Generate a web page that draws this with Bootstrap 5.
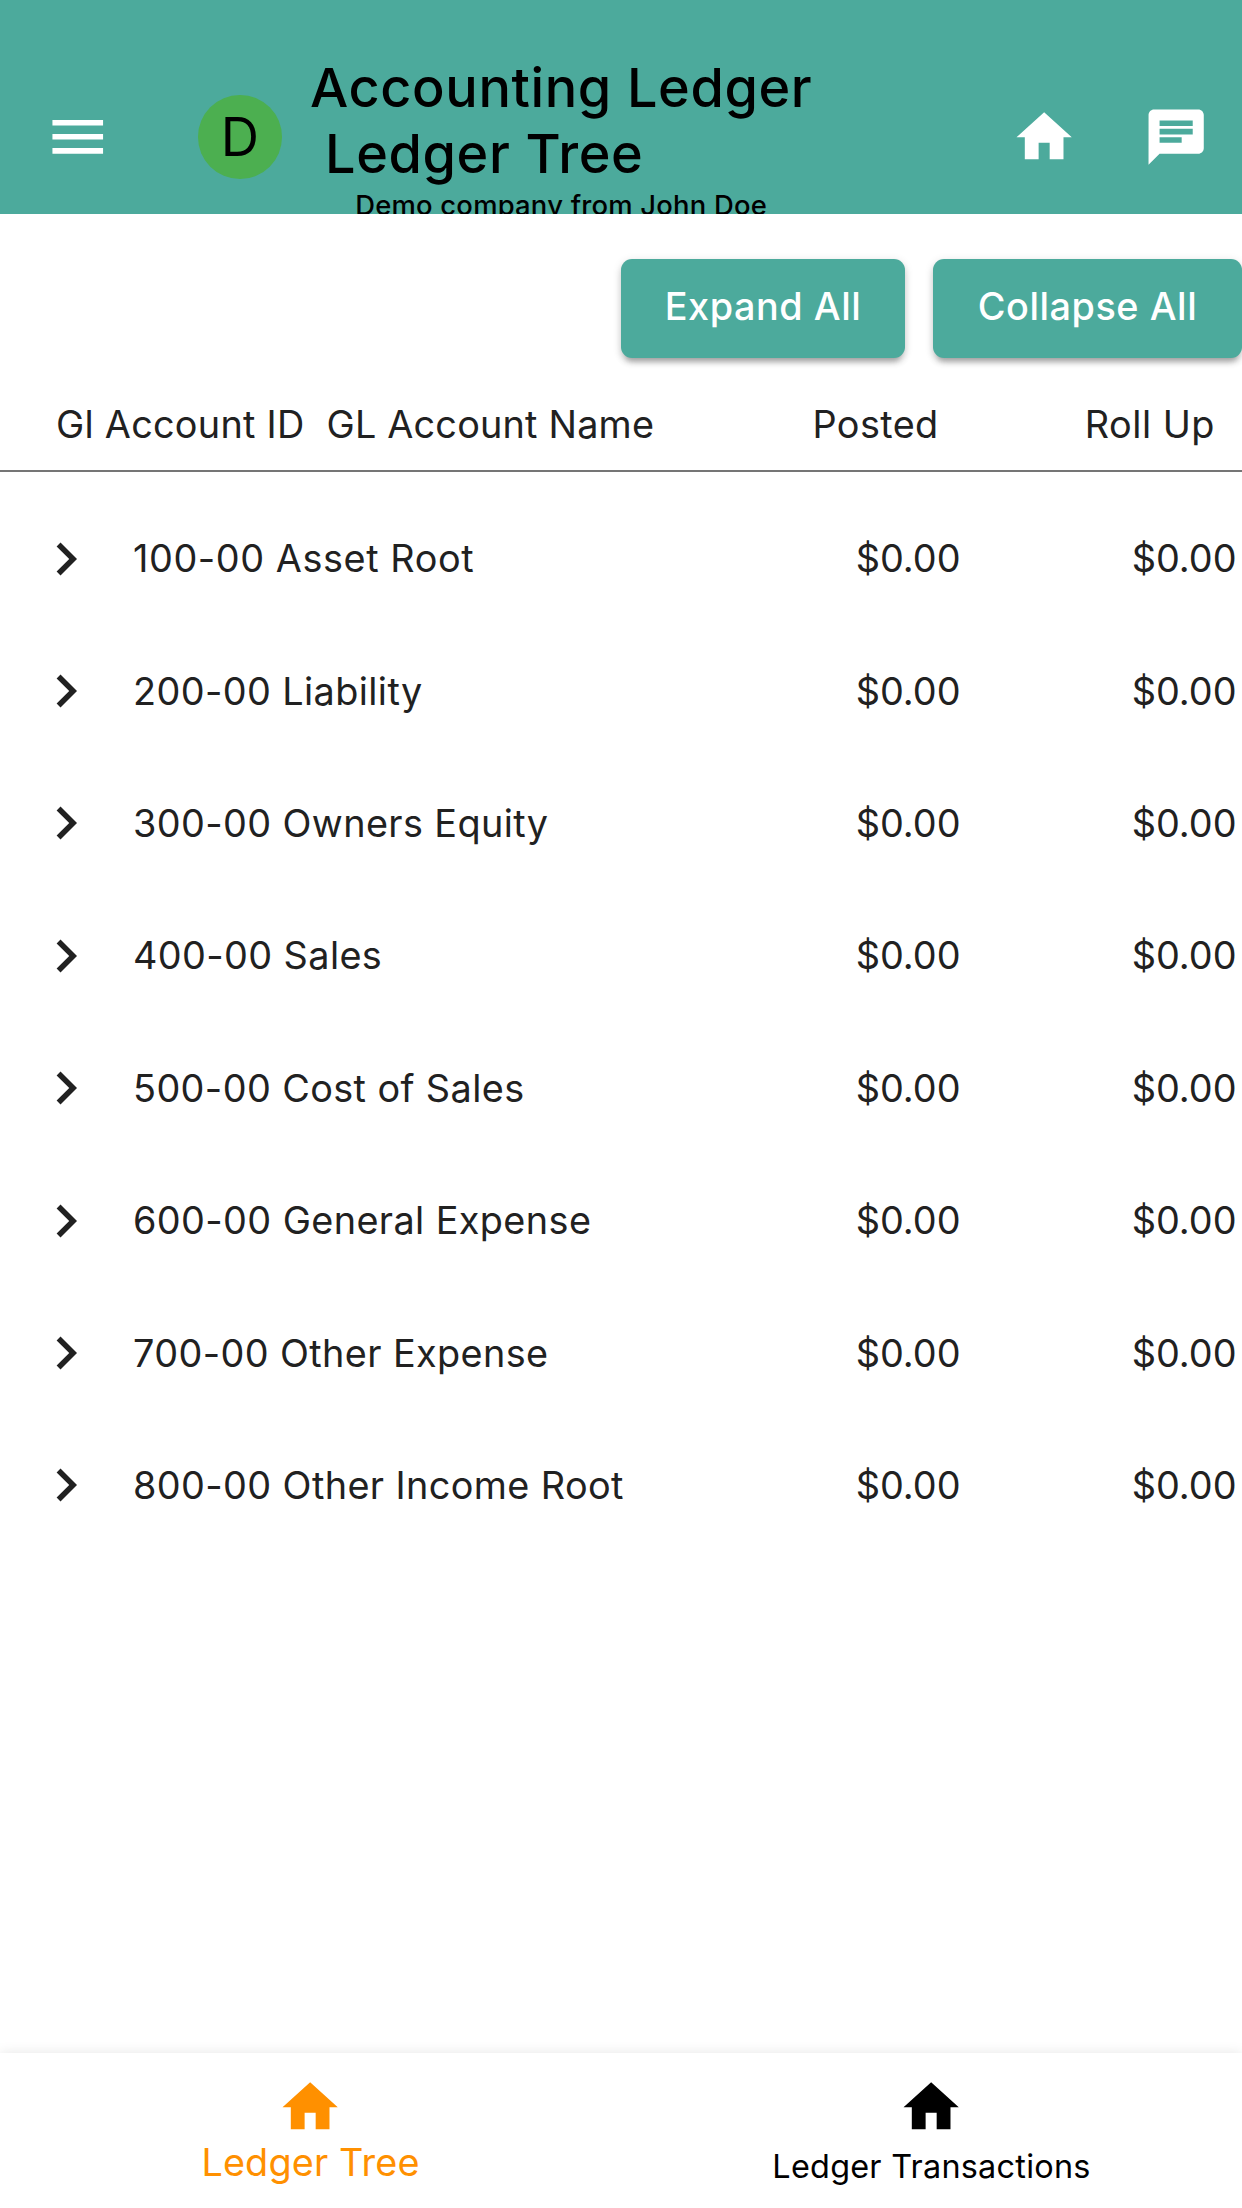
<!DOCTYPE html>
<html lang="en">
<head>
<meta charset="utf-8">
<meta name="viewport" content="width=device-width, initial-scale=1">
<title>Accounting Ledger</title>
<link href="https://cdn.jsdelivr.net/npm/bootstrap@5.3.0/dist/css/bootstrap.min.css" rel="stylesheet">
<style>
  :root { --teal: #4caa9c; --ink: #212121; --accent: #ff9000; }
  body { font-family: Inter, "Liberation Sans", sans-serif; color: var(--ink); height: 2208px; background: #fff; font-size: 37.8px; }
  svg { display: block; fill: currentColor; flex: none; }

  .app-bar { height: 214.4px; background: var(--teal); padding: 54.8px 33px 0 43.5px; }
  .bar-icon { margin-top: 48.8px; }
  .menu-icon { margin-top: 48px; }
  .chat-icon { margin-left: 65.5px; }
  .avatar { width: 83.5px; height: 83.5px; margin: 40.6px 0 0 87.1px; background: #4caf50; color: #000; font-size: 53px; line-height: 85px; flex: none; }
  .heading { margin-left: 28.4px; color: #000; font-weight: 500; }
  .heading h1 { font-size: 54px; line-height: 65.7px; letter-spacing: .62px; }
  .heading .second-line { padding-left: 15px; }
  .heading p { font-size: 27.4px; line-height: 33px; font-weight: 450; letter-spacing: .22px; margin-top: 2.6px; }

  .actions { padding-top: 44.2px; gap: 28px; }
  .btn-teal { --bs-btn-color: #fff; --bs-btn-bg: var(--teal); --bs-btn-hover-bg: #43988c; --bs-btn-hover-color: #fff;
    --bs-btn-border-width: 0; --bs-btn-border-radius: 11px; --bs-btn-padding-x: 0; --bs-btn-padding-y: 0;
    --bs-btn-font-size: 37.8px; --bs-btn-font-weight: 500; height: 99px; line-height: 95px; padding-bottom: 3px; letter-spacing: .55px;
    box-shadow: 0 8px 5px -5px rgba(0,0,0,.2), 0 5px 6px rgba(0,0,0,.14), 0 2px 10px rgba(0,0,0,.12); }
  .btn-expand { width: 284px; }
  .btn-collapse { width: 309px; }

  .ledger-head { height: 114.3px; padding: 43px 27px 0 56px; line-height: 47px; border-bottom: 2px solid #757575; letter-spacing: .27px; }
  .head-id { width: 270.5px; }
  .head-name { width: 486px; letter-spacing: .2px; }
  .head-posted { letter-spacing: .4px; }
  .head-roll { letter-spacing: .5px; }

  .ledger { padding-top: 20.6px; }
  .ledger-row { height: 132.4px; padding: 0 5.5px 0 33px; }
  .ledger-row .account { margin-left: 34px; letter-spacing: .4px; }
  .ledger-row:first-child .account { letter-spacing: .58px; }
  .amount { width: 276px; }

  .bottom-nav { height: 154.7px; box-shadow: 0 0 12px rgba(0,0,0,.1); background: #fff; }
  .bottom-nav a { padding-top: 20.6px; color: #000; }
  .bottom-nav .label { font-size: 32.4px; line-height: 46px; margin-top: 3.6px; letter-spacing: .25px; }
  .bottom-nav a.active { color: var(--accent); }
  .bottom-nav a.active .label { font-size: 37.8px; margin-top: -1.2px; letter-spacing: .15px; }
</style>
<script src="https://cdn.jsdelivr.net/npm/bootstrap@5.3.0/dist/js/bootstrap.bundle.min.js"></script>
</head>
<body class="d-flex flex-column overflow-hidden">
<header class="app-bar d-flex align-items-start overflow-hidden flex-shrink-0 text-white">
  <svg class="bar-icon menu-icon" width="67.5" height="67.5" viewBox="0 0 24 24" aria-label="Menu"><path d="M3 18h18v-2H3v2zm0-5h18v-2H3v2zm0-7v2h18V6H3z"/></svg>
  <div class="avatar rounded-circle text-center">D</div>
  <div class="heading text-nowrap d-flex flex-column">
    <h1 class="m-0 fw-medium">Accounting Ledger<br><span class="second-line">Ledger Tree</span></h1>
    <p class="mb-0 text-center">Demo company from John Doe</p>
  </div>
  <svg class="bar-icon ms-auto" width="66.3" height="66.3" viewBox="0 0 24 24" aria-label="Home"><path d="M10 20v-6h4v6h5v-8h3L12 3 2 12h3v8z"/></svg>
  <svg class="bar-icon chat-icon" width="66.3" height="66.3" viewBox="0 0 24 24" aria-label="Messages"><path d="M20 2H4c-1.1 0-1.99.9-1.99 2L2 22l4-4h14c1.1 0 2-.9 2-2V4c0-1.1-.9-2-2-2zM6 9h12v2H6V9zm8 5H6v-2h8v2zm4-6H6V6h12v2z"/></svg>
</header>

<main class="flex-grow-1">
  <div class="actions d-flex justify-content-end">
    <button class="btn btn-teal btn-expand">Expand All</button>
    <button class="btn btn-teal btn-collapse">Collapse All</button>
  </div>
  <div class="ledger-head d-flex text-nowrap">
    <div class="head-id">Gl Account ID</div>
    <div class="head-name">GL Account Name</div>
    <div class="head-posted">Posted</div>
    <div class="head-roll ms-auto">Roll Up</div>
  </div>
  <div class="ledger" id="ledger"></div>
</main>

<nav class="bottom-nav d-flex flex-shrink-0">
  <a class="active w-50 d-flex flex-column align-items-center text-decoration-none" href="#">
    <svg width="66.3" height="66.3" viewBox="0 0 24 24"><path d="M10 20v-6h4v6h5v-8h3L12 3 2 12h3v8z"/></svg>
    <span class="label">Ledger Tree</span>
  </a>
  <a class="w-50 d-flex flex-column align-items-center text-decoration-none" href="#">
    <svg width="66.3" height="66.3" viewBox="0 0 24 24"><path d="M10 20v-6h4v6h5v-8h3L12 3 2 12h3v8z"/></svg>
    <span class="label">Ledger Transactions</span>
  </a>
</nav>

<script>
  const accounts = ["100-00 Asset Root", "200-00 Liability", "300-00 Owners Equity", "400-00 Sales",
    "500-00 Cost of Sales", "600-00 General Expense", "700-00 Other Expense", "800-00 Other Income Root"];
  document.getElementById("ledger").innerHTML = accounts.map(name => `
    <div class="ledger-row d-flex align-items-center text-nowrap">
      <svg width="66" height="66" viewBox="0 0 24 24"><path d="M10 6 8.59 7.41 13.17 12l-4.58 4.59L10 18l6-6z"/></svg>
      <span class="account me-auto">${name}</span>
      <span class="amount text-end">$0.00</span>
      <span class="amount text-end">$0.00</span>
    </div>`).join("");
</script>
</body>
</html>
